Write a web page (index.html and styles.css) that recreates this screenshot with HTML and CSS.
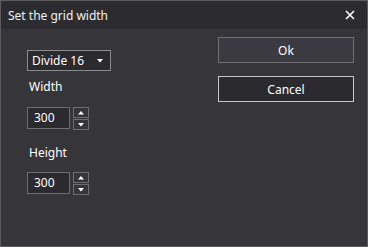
FILE: index.html
```html
<!DOCTYPE html>
<html>
<head>
<meta charset="utf-8">
<link rel="stylesheet" href="styles.css">
</head>
<body>
<div class="window">
  <div class="titlebar">
    <span class="title">Set the grid width</span>
    <svg class="close" width="10" height="10" viewBox="0 0 10 10"><path d="M1 1 L9 9 M9 1 L1 9" stroke="#ffffff" stroke-width="1.6"/></svg>
  </div>
  <div class="content">
    <div class="left">
      <div class="combo">
        <span>Divide 16</span>
        <svg width="6" height="4" viewBox="0 0 6 4"><path d="M0 0 H6 L3 3.5 Z" fill="#ffffff"/></svg>
      </div>
      <div class="label first">Width</div>
      <div class="numeric">
        <div class="numbox">300</div>
        <div class="spin">
          <div class="spinbtn"><svg width="6" height="4" viewBox="0 0 6 4"><path d="M0 3.5 H6 L3 0 Z" fill="#ffffff"/></svg></div>
          <div class="spinbtn"><svg width="6" height="4" viewBox="0 0 6 4"><path d="M0 0 H6 L3 3.5 Z" fill="#ffffff"/></svg></div>
        </div>
      </div>
      <div class="label second">Height</div>
      <div class="numeric">
        <div class="numbox">300</div>
        <div class="spin">
          <div class="spinbtn"><svg width="6" height="4" viewBox="0 0 6 4"><path d="M0 3.5 H6 L3 0 Z" fill="#ffffff"/></svg></div>
          <div class="spinbtn"><svg width="6" height="4" viewBox="0 0 6 4"><path d="M0 0 H6 L3 3.5 Z" fill="#ffffff"/></svg></div>
        </div>
      </div>
    </div>
    <div class="right">
      <button class="btn ok">Ok</button>
      <button class="btn cancel">Cancel</button>
    </div>
  </div>
</div>
</body>
</html>
```
FILE: styles.css
```css
html, body {
  margin: 0;
  padding: 0;
  background: #36353a;
}
body {
  font-family: "Noto Sans", "Open Sans", sans-serif;
  font-size: 12px;
  color: #ffffff;
}
.window {
  width: 368px;
  height: 247px;
  box-sizing: border-box;
  border: 1px solid #5c5c5e;
  background: #36353a;
  display: flex;
  flex-direction: column;
}
.titlebar {
  height: 28px;
  flex: none;
  background: #2c2b2f;
  display: flex;
  align-items: center;
  justify-content: space-between;
  padding: 0 12px 0 7px;
}
.title {
  font-size: 12px;
  color: #f2f2f2;
}
.close {
  display: block;
}
.content {
  display: flex;
  justify-content: space-between;
  padding: 8px 13px 0 26px;
}
.left {
  display: flex;
  flex-direction: column;
  margin-top: 13px;
}
.combo {
  width: 84px;
  height: 21px;
  box-sizing: border-box;
  border: 1px solid #8c8c8e;
  background: #2b2a2e;
  display: flex;
  align-items: center;
  justify-content: space-between;
  padding: 0 7px 0 4px;
  line-height: 16px;
}
.combo svg { display: block; }
.label {
  line-height: 16px;
  padding-left: 2px;
}
.label.first { margin-top: 8px; margin-bottom: 12px; }
.label.second { margin-top: 15px; margin-bottom: 11px; }
.numeric {
  display: flex;
  align-items: flex-start;
  gap: 3px;
}
.numbox {
  width: 43px;
  height: 22px;
  box-sizing: border-box;
  border: 1px solid #6e6e70;
  background: #2b2a2e;
  padding-left: 6px;
  line-height: 20px;
}
.spin {
  display: flex;
  flex-direction: column;
  gap: 1px;
}
.spinbtn {
  width: 16px;
  height: 11px;
  box-sizing: border-box;
  border: 1px solid #6e6e70;
  background: #36353a;
  display: flex;
  align-items: center;
  justify-content: center;
}
.spinbtn svg { display: block; }
.right {
  display: flex;
  flex-direction: column;
  gap: 13px;
  margin-top: 0;
}
.btn {
  width: 136px;
  height: 26px;
  box-sizing: border-box;
  font-family: "Noto Sans", "Open Sans", sans-serif;
  font-size: 12px;
  color: #ffffff;
  padding: 0;
}
.ok {
  background: #3b3a40;
  border: 1px solid #707072;
}
.cancel {
  background: #2b2a2e;
  border: 1px solid #c8c8c8;
}
```
